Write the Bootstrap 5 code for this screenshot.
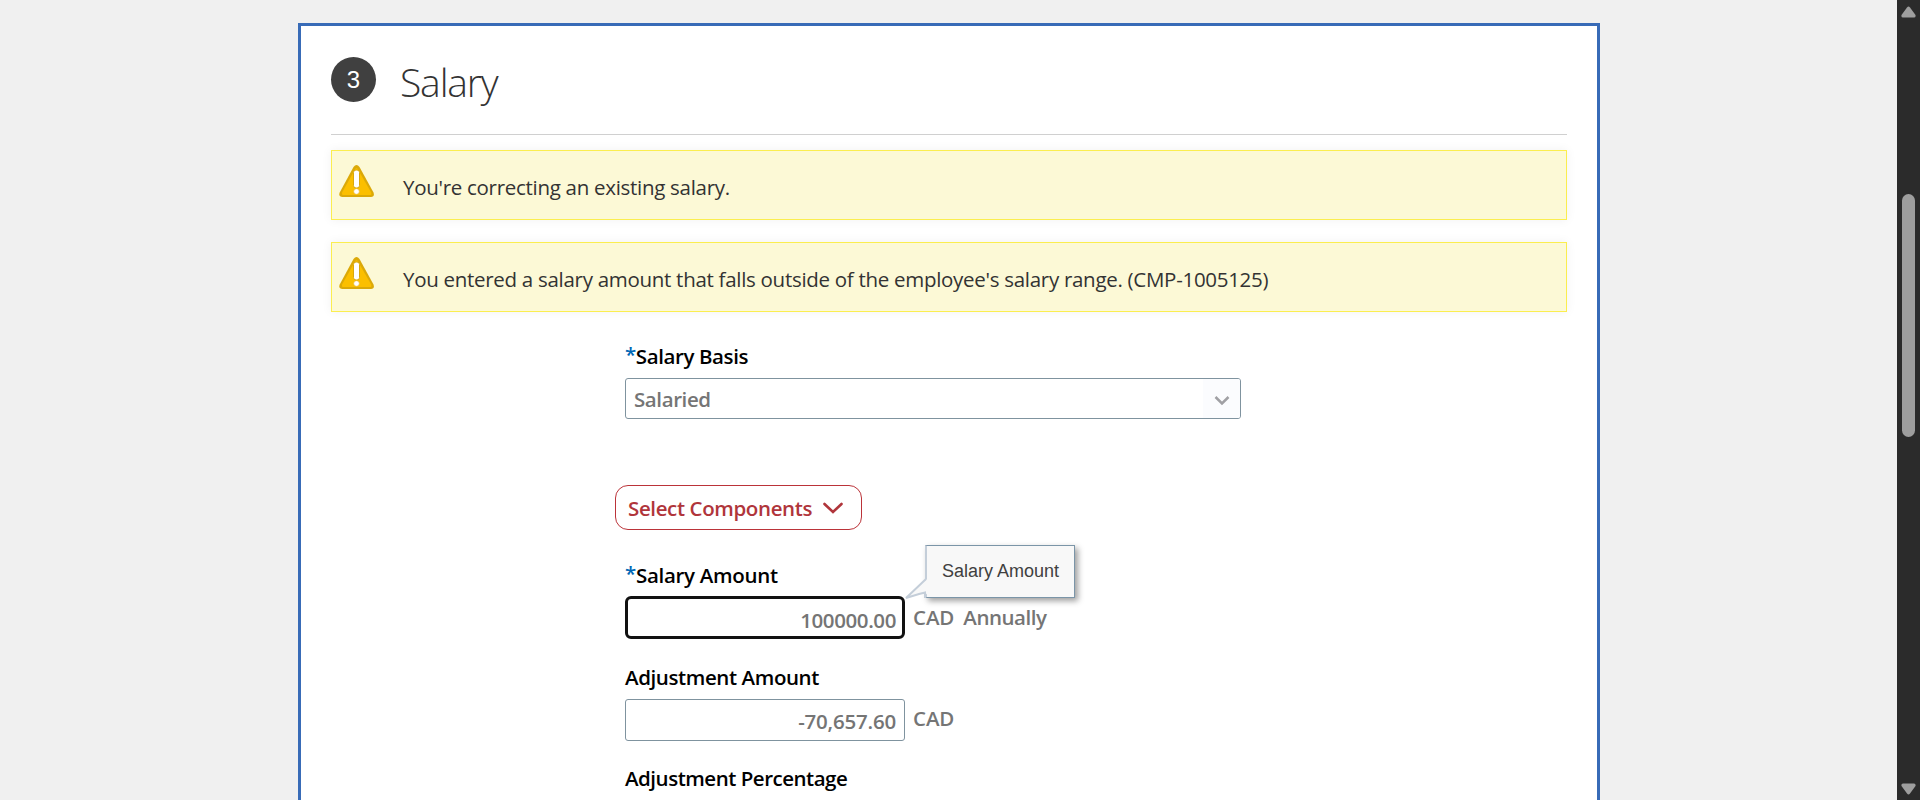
<!DOCTYPE html>
<html lang="en">
<head>
<meta charset="utf-8">
<meta name="viewport" content="width=device-width, initial-scale=1">
<title>Salary</title>
<link href="https://cdn.jsdelivr.net/npm/bootstrap@5.3.0/dist/css/bootstrap.min.css" rel="stylesheet">
<style>
body{background:#f0f0f0;font-family:"Open Sans",sans-serif;font-size:20.5px;line-height:30px;height:800px;color:#333}
.page{padding:23px 0 0 298px;height:800px}
.panel{width:1302px;height:777px;border:3px solid #386bb7;border-bottom:0;padding:0 30px}
.head{height:109px;border-bottom:1px solid #d0d0d0;padding-top:31px}
.step{width:45px;height:45px;background:#404040;font:24px/45px "Liberation Sans",sans-serif;margin-right:24px}
.ttl{font-size:39px;font-weight:300;line-height:45px;letter-spacing:-1.15px;margin:2px 0 0;color:#333}
.note{height:70px;background:#fcf9d6;border:1px solid #fbee4f;box-shadow:0 0 10px rgba(0,0,0,.06);letter-spacing:-.29px}
.note svg{margin:13px 0 0 7px}
.note-txt{margin-left:28px;padding-top:21px}
.note-first{margin-top:15px}
.note-second{margin-top:22px;margin-bottom:29px}
.fields{padding-left:294px;letter-spacing:-.4px;font-weight:600}
.lbl{color:#000;height:30px;margin-bottom:7px}
.lbl i{font-style:normal;color:#0067b5;position:relative;top:-2px}
.lbl-wide{letter-spacing:-.48px;margin:22px 0 0}
.lbl-amt{letter-spacing:-.3px}
.box{border:1px solid #7f939f;border-radius:3px;color:#757575;background:#fff}
.basis{width:616px;height:41px;padding-left:8px}
.basis-val{padding-top:5px}
.basis-drop{width:37px;background:#fbfcfe}
.cmp{width:247px;height:45px;border:1px solid #bb3339;border-radius:13px;color:#b0353b;margin:66px 0 30px -10px;padding:7px 0 0 12px;background:#fff;gap:11px;letter-spacing:-.38px;line-height:30px}
.cmp svg{margin-top:9px}
.amt-row{margin-bottom:23px}
.num{width:280px;height:42px;padding:6px 8px 0 0}
.num-focus{height:43px;border:3px solid #111;border-radius:6px;margin-top:-1px;padding:6px 6px 0 0}
.num-adj{letter-spacing:-.2px}
.unit{color:#757575;margin-left:8px;letter-spacing:-.1px;padding-top:4px}
.unit-amt{padding-top:5px}
.unit-amt .freq{letter-spacing:-.45px;margin-left:9px}
.tip{left:300px;top:-52px;width:150px;height:53px;background:#f8f8f8;border:1px solid #7b95a8;border-left:2px solid #c4ced9;box-shadow:3px 3px 6px rgba(0,0,0,.38);font:18px/20px "Liberation Sans",sans-serif;letter-spacing:0;color:#404040;padding:15px 0 0 15px}
.tail{left:278px;top:-20px}
.sbar{width:23px;background:#2b2b2b}
.sbar .up{margin-top:6px}
.sbar .down{margin-bottom:5px}
.thumb{width:13px;height:243px;border-radius:7px;background:#9e9e9e;margin-top:176px}
</style>
</head>
<body class="d-flex justify-content-between overflow-hidden">
<main class="page">
<section class="panel bg-white">
<header class="head d-flex align-items-start">
<div class="step rounded-circle text-white text-center">3</div>
<h1 class="ttl">Salary</h1>
</header>
<div class="note note-first d-flex align-items-start">
<svg width="36" height="34" viewBox="0 0 36 34"><path d="M14.500 3Q17.500-.8 20.500 3L34.500 28.500Q36 33 32 33H3.500Q-.8 33 .7 28.500Z" fill="#dba908"/><path d="M16 5.500Q17.500 3 19 5.500L32.200 28.500Q33 31 31.500 31H4Q2.300 31 3 28.500Z" fill="#fbbf00"/><rect x="14.500" y="6" width="6" height="18" rx="2.500" fill="#fff" stroke="#d9a80b"/><circle cx="17.500" cy="27.500" r="2.800" fill="#fff" stroke="#e8b52a" stroke-width=".6"/></svg>
<div class="note-txt">You're correcting an existing salary.</div>
</div>
<div class="note note-second d-flex align-items-start">
<svg width="36" height="34" viewBox="0 0 36 34"><path d="M14.500 3Q17.500-.8 20.500 3L34.500 28.500Q36 33 32 33H3.500Q-.8 33 .7 28.500Z" fill="#dba908"/><path d="M16 5.500Q17.500 3 19 5.500L32.200 28.500Q33 31 31.500 31H4Q2.300 31 3 28.500Z" fill="#fbbf00"/><rect x="14.500" y="6" width="6" height="18" rx="2.500" fill="#fff" stroke="#d9a80b"/><circle cx="17.500" cy="27.500" r="2.800" fill="#fff" stroke="#e8b52a" stroke-width=".6"/></svg>
<div class="note-txt">You entered a salary amount that falls outside of the employee's salary range. (CMP-1005125)</div>
</div>
<div class="fields">
<div class="lbl"><i>*</i>Salary Basis</div>
<div class="box basis d-flex justify-content-between overflow-hidden">
<span class="basis-val">Salaried</span>
<span class="basis-drop d-flex align-items-center justify-content-center"><svg width="16" height="11" viewBox="0 0 16 11" class="mt-1"><path d="M1.500 2L8 8.500 14.500 2" fill="none" stroke="#a0a0a4" stroke-width="2.500"/></svg></span>
</div>
<button type="button" class="cmp d-flex align-items-start fw-semibold">Select Components<svg width="20" height="13" viewBox="0 0 20 13"><path d="M1.500 2L10 10 18.500 2" fill="none" stroke="#b0353b" stroke-width="2.600" stroke-linecap="round"/></svg></button>
<div class="lbl lbl-amt"><i>*</i>Salary Amount</div>
<div class="amt-row d-flex position-relative">
<div class="box num num-focus text-end">100000.00</div>
<div class="unit unit-amt d-flex"><span>CAD</span><span class="freq">Annually</span></div>
<div class="tip position-absolute">Salary Amount</div>
<svg class="tail position-absolute" width="26" height="24" viewBox="0 0 26 24"><path d="M24 2L3 21 16 17 22 15.500 24 17.500Z" fill="#f8f8f8"/><path d="M23 2L3 21 16 17 22 15.500V21" fill="none" stroke="#c4ced9" stroke-width="2"/></svg>
</div>
<div class="lbl">Adjustment Amount</div>
<div class="d-flex">
<div class="box num num-adj text-end">-70,657.60</div>
<div class="unit">CAD</div>
</div>
<div class="lbl lbl-wide">Adjustment Percentage</div>
</div>
</section>
</main>
<aside class="sbar d-flex flex-column align-items-center">
<svg class="up" width="15" height="12" viewBox="0 0 15 12"><path d="M6 1.500Q7.500-.5 9 1.500L14.500 9Q15 11.500 13 11.500H2Q0 11.500.5 9Z" fill="#9e9e9e"/></svg>
<div class="thumb"></div>
<svg class="down mt-auto" width="15" height="12" viewBox="0 0 15 12"><path d="M6 10.500Q7.500 12.500 9 10.500L14.500 3Q15 .5 13 .5H2Q0 .5.5 3Z" fill="#9e9e9e"/></svg>
</aside>
<script src="https://cdn.jsdelivr.net/npm/bootstrap@5.3.0/dist/js/bootstrap.bundle.min.js"></script>
</body>
</html>
